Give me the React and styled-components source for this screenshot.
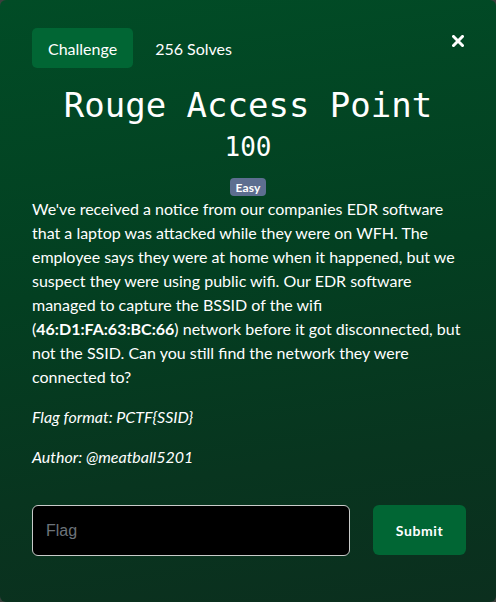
import React from 'react'
import styled, { createGlobalStyle } from 'styled-components'

const GlobalStyle = createGlobalStyle`
    html, body {
        margin: 0;
        padding: 0;
        background: #3a3f3c;
    }
    * {
        box-sizing: border-box;
    }
`

const Modal = styled.div`
    width: 496px;
    height: 602px;
    border-radius: 6px;
    overflow: hidden;
    padding: 28px 30px 46px 32px;
    background: linear-gradient(172deg, #014c26 0%, #033f21 45%, #08351f 75%, #0b2f1e 100%);
    color: #ffffff;
    font-family: Lato, "Open Sans", sans-serif;
    display: flex;
    flex-direction: column;
`

const Header = styled.div`
    display: flex;
    align-items: center;
    gap: 22px;
    height: 40px;
`

const Tab = styled.div`
    height: 40px;
    padding: 0 16px;
    display: flex;
    align-items: center;
    background: #016634;
    border-radius: 5px;
    font-size: 16px;
`

const Solves = styled.div`
    font-size: 16px;
    padding-top: 1px;
`

const Close = styled.button`
    margin-left: auto;
    margin-right: -2px;
    margin-top: -14px;
    width: 20px;
    height: 20px;
    padding: 0;
    border: none;
    background: none;
    display: flex;
    align-items: center;
    justify-content: center;
    cursor: pointer;
`

const Title = styled.h1`
    margin: 17px 0 0;
    padding-right: 2px;
    text-align: center;
    font-family: "DejaVu Sans Mono", "Liberation Mono", monospace;
    font-weight: 400;
    font-size: 34px;
    line-height: 40px;
`

const Points = styled.div`
    margin-top: 6px;
    padding-right: 2px;
    text-align: center;
    font-family: "DejaVu Sans Mono", "Liberation Mono", monospace;
    font-size: 26px;
    line-height: 32px;
`

const BadgeRow = styled.div`
    margin-top: 15px;
    padding-right: 2px;
    display: flex;
    justify-content: center;
`

const Badge = styled.span`
    height: 18px;
    padding: 0 5px;
    display: flex;
    align-items: center;
    background: #5d6e90;
    border-radius: 4px;
    font-size: 12px;
    font-weight: 700;
    letter-spacing: 0.2px;
`

const Description = styled.div`
    margin-top: 1px;
    padding-right: 2px;
    font-size: 16px;
    line-height: 24px;
`

const Paragraph = styled.p`
    margin: 0 0 16px;
    font-style: ${props => props.italic ? 'italic' : 'normal'};
    &:last-child {
        margin-bottom: 0;
    }
`

const Form = styled.form`
    margin-top: 36px;
    display: flex;
    align-items: flex-start;
    gap: 23px;
`

const FlagInput = styled.input`
    flex: none;
    width: 318px;
    height: 51px;
    padding: 0 13px;
    background: #000000;
    border: 1px solid #c9cbca;
    border-radius: 6px;
    color: #ffffff;
    font-family: "Liberation Sans", Arial, sans-serif;
    font-size: 16px;
    outline: none;

    &::placeholder {
        color: #6c737a;
    }
`

const SubmitButton = styled.button`
    flex: none;
    width: 93px;
    height: 50px;
    border: none;
    border-radius: 6px;
    background: #016634;
    color: #ffffff;
    font-family: Lato, "Open Sans", sans-serif;
    font-weight: 700;
    font-size: 14px;
    letter-spacing: 0.6px;
    cursor: pointer;
`

export default function App() {
    return (
        <>
            <GlobalStyle />
            <Modal>
                <Header>
                    <Tab>Challenge</Tab>
                    <Solves>256 Solves</Solves>
                    <Close aria-label="Close">
                        <svg width="12" height="12" viewBox="0 0 12 12">
                            <path d="M1.5 1.5 L10.5 10.5 M10.5 1.5 L1.5 10.5" stroke="#ffffff" strokeWidth="3" strokeLinecap="square" />
                        </svg>
                    </Close>
                </Header>
                <Title>Rouge Access Point</Title>
                <Points>100</Points>
                <BadgeRow>
                    <Badge>Easy</Badge>
                </BadgeRow>
                <Description>
                    <Paragraph>
                        We've received a notice from our companies EDR software that a laptop was attacked while they were on WFH. The employee says they were at home when it happened, but we suspect they were using public wifi. Our EDR software managed to capture the BSSID of the wifi (<b>46:D1:FA:63:BC:66</b>) network before it got disconnected, but not the SSID. Can you still find the network they were connected to?
                    </Paragraph>
                    <Paragraph italic>Flag format: PCTF{'{'}SSID{'}'}</Paragraph>
                    <Paragraph italic>Author: @meatball5201</Paragraph>
                </Description>
                <Form onSubmit={e => e.preventDefault()}>
                    <FlagInput placeholder="Flag" />
                    <SubmitButton type="submit">Submit</SubmitButton>
                </Form>
            </Modal>
        </>
    )
}
